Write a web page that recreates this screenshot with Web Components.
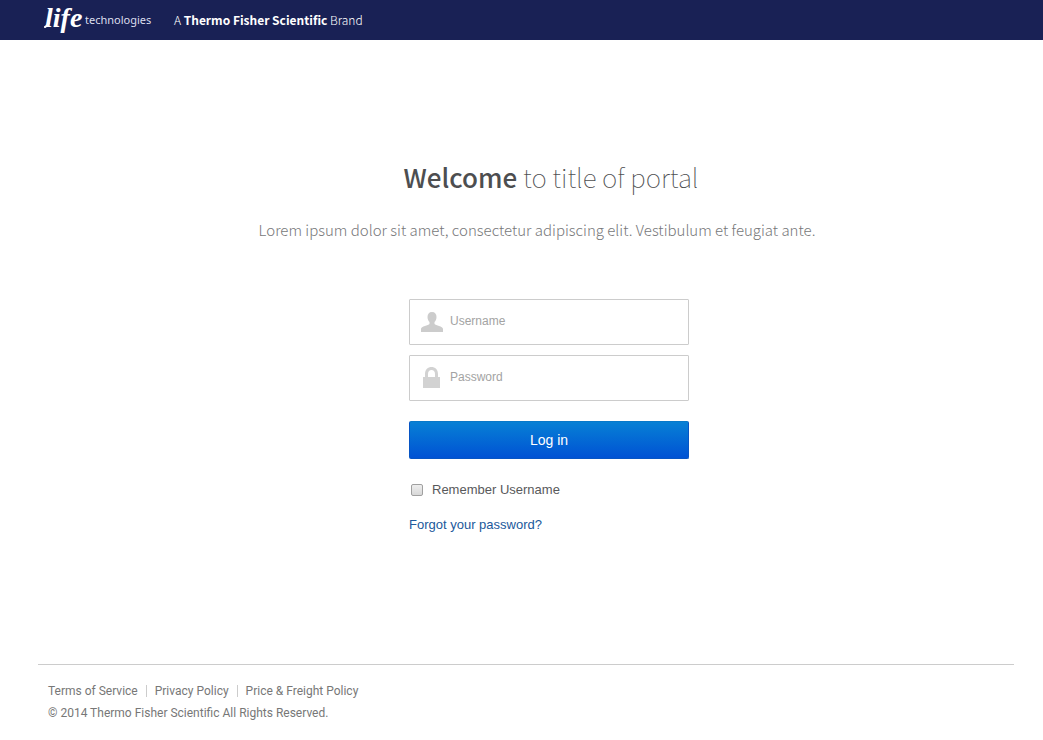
<!DOCTYPE html>
<html lang="en">
<head>
<meta charset="utf-8">
<title>Log in</title>
<style>
body { margin: 0; background: #fff; color: #58595b; font-family: "Liberation Sans", Arial, sans-serif; }
</style>
</head>
<body>
<portal-page></portal-page>
<script>
function define(name, html, setup) {
  const template = document.createElement('template');
  template.innerHTML = html;
  customElements.define(name, class extends HTMLElement {
    constructor() {
      super();
      this.attachShadow({ mode: 'open' }).append(template.content.cloneNode(true));
    }
    connectedCallback() { if (setup) setup(this, this.shadowRoot); }
  });
}

define('brand-logo', `
<style>
:host { display: flex; align-items: center; color: #fff; }
svg { display: block; width: 108px; height: 40px; }
.script { font: italic bold 28px "Liberation Serif", serif; }
.name { font: 11px "Noto Sans", sans-serif; }
</style>
<svg viewBox="0 0 108 40" role="img" aria-label="life technologies" fill="#fff">
  <path d="M1 27 C3 26 4 25 5 23" fill="none" stroke="#fff" stroke-width="2" stroke-linecap="round"/>
  <text class="script" x="1" y="27">life</text>
  <text class="name" x="41" y="24" fill="#dcdeed">technologies</text>
</svg>`);

define('portal-header', `
<style>
:host { display: flex; align-items: center; gap: 22px; height: 40px; padding-left: 44px; background: #192155; color: #fff;
  font: 12px/20px "Noto Sans CJK SC", sans-serif; }
p { margin: 0; font-weight: 300; }
b { font-weight: 700; }
</style>
<brand-logo></brand-logo><p>A <b>Thermo Fisher Scientific</b> Brand</p>`);

define('portal-intro', `
<style>
:host { display: flex; flex-direction: column; align-items: center; font-family: "Noto Sans CJK SC", sans-serif; }
h1 { margin: 0; font-size: 26px; line-height: 40px; font-weight: 100; color: #4d4e50; padding-left: 4px; }
h1 b { font-weight: 500; }
p { margin: 21px 24px 0 0; font-size: 15px; line-height: 24px; font-weight: 300; color: #77787a; }
</style>
<h1><b>Welcome</b> to title of portal</h1>
<p>Lorem ipsum dolor sit amet, consectetur adipiscing elit. Vestibulum et feugiat ante.</p>`);

define('text-field', `
<style>
:host { display: block; }
label { display: flex; align-items: center; box-sizing: border-box; height: 46px; padding-left: 10px; gap: 6px;
  border: 1px solid #ccc; border-radius: 1px; background: #fff; }
.icon { display: flex; width: 24px; }
input { flex: 1; min-width: 0; border: 0; padding: 0 0 2px; outline: 0; background: none; color: #58595b; font: 12px/20px "Liberation Sans", Arial, sans-serif; }
input::placeholder { color: #a3a3a3; opacity: 1; }
</style>
<label><span class="icon"><slot></slot></span><input></label>`, (host, root) => {
  const input = root.querySelector('input');
  input.type = host.getAttribute('type');
  input.placeholder = host.getAttribute('label');
  input.setAttribute('aria-label', host.getAttribute('label'));
});

define('login-form', `
<style>
:host { display: block; width: 280px; font: 13px/20px "Liberation Sans", Arial, sans-serif; }
form { display: flex; flex-direction: column; }
text-field { margin-bottom: 10px; }
svg { display: block; width: 24px; height: 24px; fill: #ccc; }
.lock { fill: #d2d2d2; }
button { height: 38px; margin-top: 10px; border: 1px solid #0755c4; border-top-color: #0878c9; border-radius: 2px; color: #fff;
  background: linear-gradient(#0780d5, #0052d4); font: 14px/20px "Liberation Sans", Arial, sans-serif; }
.remember { display: flex; align-items: center; gap: 9px; margin-top: 21px; padding-left: 2px; }
.remember input { appearance: none; box-sizing: border-box; width: 12px; height: 12px; margin: 0; border: 1px solid #a0a0a0;
  border-radius: 2px; background: linear-gradient(#eee, #d8d8d8); }
.remember input:checked { background: #0052d4; }
a { align-self: flex-start; margin-top: 15px; color: #21599b; text-decoration: none; }
</style>
<form>
  <text-field type="text" label="Username"><svg viewBox="0 0 24 24" aria-hidden="true"><path d="M12 2c3 0 4.500 2 4.500 5 0 2.500-1 4-2 5v2c1 1.500 8.500 2 8.500 5v3H1v-3c0-3 7.500-3.500 8.500-5v-2c-1-1-2-2.500-2-5 0-3 1.500-5 4.500-5z"/></svg></text-field>
  <text-field type="password" label="Password"><svg class="lock" viewBox="0 0 24 24" aria-hidden="true"><path d="M3 11h2V8c0-4.500 3-7 6.500-7S18 3.500 18 8v3h2v11H3zM8 11h7V8c0-2.500-1.500-4-3.500-4S8 5.500 8 8z" fill-rule="evenodd"/></svg></text-field>
  <button type="button">Log in</button>
  <label class="remember"><input type="checkbox">Remember Username</label>
  <a href="#">Forgot your password?</a>
</form>`);

define('portal-footer', `
<style>
:host { display: block; margin: 0 29px 0 38px; border-top: 1px solid #ccc; padding: 15px 10px 16px; color: #777;
  font: 12px/22px Roboto, Arial, sans-serif; }
nav { display: flex; align-items: center; height: 22px; }
a { color: inherit; text-decoration: none; line-height: 12px; }
a + a { margin-left: 8px; padding-left: 8px; border-left: 1px solid #ccc; }
p { margin: 0; }
</style>
<nav aria-label="Legal"><a href="#">Terms of Service</a><a href="#">Privacy Policy</a><a href="#">Price &amp; Freight Policy</a></nav>
<p>© 2014 Thermo Fisher Scientific All Rights Reserved.</p>`);

define('portal-page', `
<style>
:host { display: flex; flex-direction: column; min-height: 100vh; }
main { flex: 1; display: flex; flex-direction: column; align-items: center; padding: 117px 0 40px 55px; }
login-form { margin-top: 57px; }
</style>
<portal-header></portal-header>
<main><portal-intro></portal-intro><login-form></login-form></main>
<portal-footer></portal-footer>`);
</script>
</body>
</html>
